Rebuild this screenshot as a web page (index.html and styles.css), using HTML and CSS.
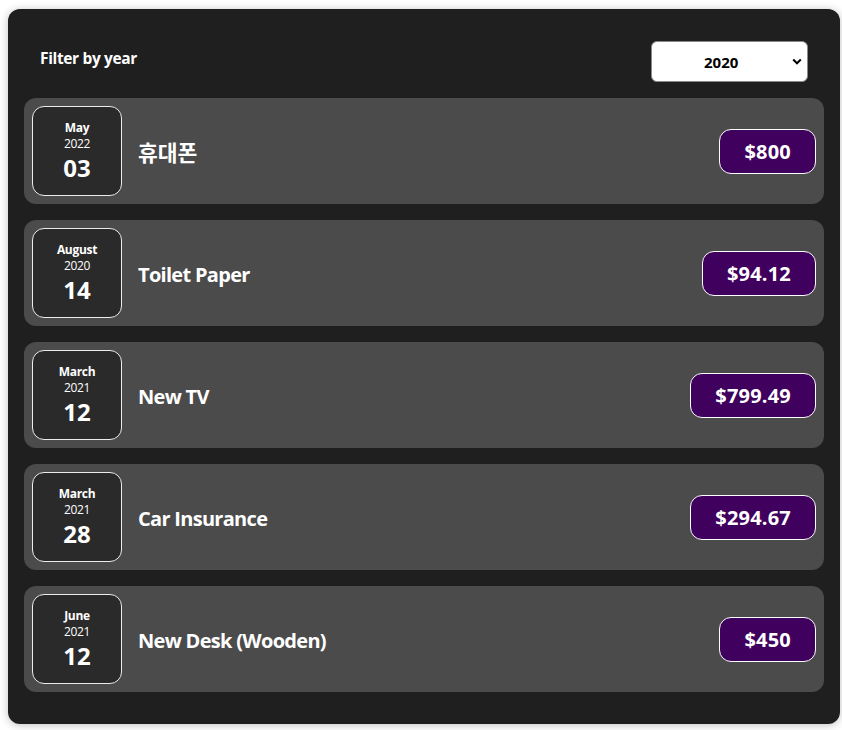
FILE: index.html
```html
<!DOCTYPE html>
<html lang="en">
<head>
<meta charset="utf-8">
<title>Expenses</title>
<link rel="stylesheet" href="styles.css">
</head>
<body>
<div class="expenses">
  <div class="filter">
    <div class="filter-control">
      <label class="filter-label">Filter by year</label>
      <div class="select-wrap">
        <select class="filter-select">
          <option>2022</option>
          <option>2021</option>
          <option selected>2020</option>
          <option>2019</option>
        </select>
        <svg class="chevron" width="10" height="7" viewBox="0 0 10 7"><path d="M1.2 1.5l3.8 3.8 3.8-3.8" fill="none" stroke="#000" stroke-width="2"/></svg>
      </div>
    </div>
  </div>
  <ul class="list">
    <li class="item">
      <div class="date"><div class="month">May</div><div class="year">2022</div><div class="day">03</div></div>
      <div class="desc"><h2 class="title title-ko" lang="ko">휴대폰</h2><div class="price">$800</div></div>
    </li>
    <li class="item">
      <div class="date"><div class="month">August</div><div class="year">2020</div><div class="day">14</div></div>
      <div class="desc"><h2 class="title">Toilet Paper</h2><div class="price">$94.12</div></div>
    </li>
    <li class="item">
      <div class="date"><div class="month">March</div><div class="year">2021</div><div class="day">12</div></div>
      <div class="desc"><h2 class="title">New TV</h2><div class="price">$799.49</div></div>
    </li>
    <li class="item">
      <div class="date"><div class="month">March</div><div class="year">2021</div><div class="day">28</div></div>
      <div class="desc"><h2 class="title">Car Insurance</h2><div class="price">$294.67</div></div>
    </li>
    <li class="item">
      <div class="date"><div class="month">June</div><div class="year">2021</div><div class="day">12</div></div>
      <div class="desc"><h2 class="title">New Desk (Wooden)</h2><div class="price">$450</div></div>
    </li>
  </ul>
</div>
</body>
</html>
```
FILE: styles.css
```css
html, body {
  margin: 0;
  padding: 0;
  background: #ffffff;
}
body {
  padding: 9px 8px 8px;
  font-family: "Open Sans", "Noto Sans CJK KR", sans-serif;
}
.expenses {
  width: 800px;
  background: #1f1f1f;
  border-radius: 12px;
  padding: 16px;
  box-shadow: 0 1px 8px rgba(0, 0, 0, 0.25);
}
.filter {
  color: #fff;
  padding: 0 16px;
}
.filter-control {
  display: flex;
  align-items: center;
  justify-content: space-between;
  margin: 16px 0;
}
.filter-label {
  font-weight: 700;
  font-size: 15.5px;
  letter-spacing: -0.35px;
  margin-bottom: 7px;
}
.select-wrap {
  position: relative;
  display: flex;
}
.filter-select {
  appearance: none;
  -webkit-appearance: none;
  width: 157px;
  height: 41px;
  font-family: inherit;
  font-size: 15px;
  font-weight: 700;
  color: #000;
  background: #fff;
  border: 1px solid #8a8a8a;
  border-radius: 6px;
  padding: 0 0 0 52px;
}
.chevron {
  position: absolute;
  right: 6px;
  top: 17px;
}
.list {
  list-style: none;
  margin: 0;
  padding: 0;
}
.item {
  display: flex;
  align-items: center;
  background: #4b4b4b;
  border-radius: 12px;
  padding: 8px;
  margin: 16px 0;
}
.item:first-child { margin-top: 0; }
.date {
  width: 90px;
  height: 90px;
  box-sizing: border-box;
  padding-top: 2px;
  border: 1px solid #ececec;
  background: #2a2a2a;
  color: #fff;
  border-radius: 12px;
  display: flex;
  flex-direction: column;
  align-items: center;
  justify-content: center;
  flex-shrink: 0;
}
.month {
  font-size: 12px;
  font-weight: 700;
  line-height: 16px;
  letter-spacing: -0.3px;
}
.year {
  font-size: 12px;
  line-height: 16px;
  letter-spacing: -0.3px;
}
.day {
  font-size: 24px;
  font-weight: 700;
  line-height: 32px;
}
.desc {
  display: flex;
  align-items: center;
  flex: 1;
}
.title {
  flex: 1;
  margin: 0 16px;
  padding-top: 3px;
  color: #fff;
  font-size: 20px;
  font-weight: 700;
  line-height: 26px;
  letter-spacing: -0.7px;
}
.title-ko {
  font-size: 21.5px;
  letter-spacing: 0;
}
.price {
  font-size: 20px;
  font-weight: 700;
  line-height: 26px;
  letter-spacing: 0.2px;
  color: #fff;
  background: #40005d;
  border: 1px solid #fff;
  border-radius: 12px;
  padding: 9px 24px 8px;
}
```
